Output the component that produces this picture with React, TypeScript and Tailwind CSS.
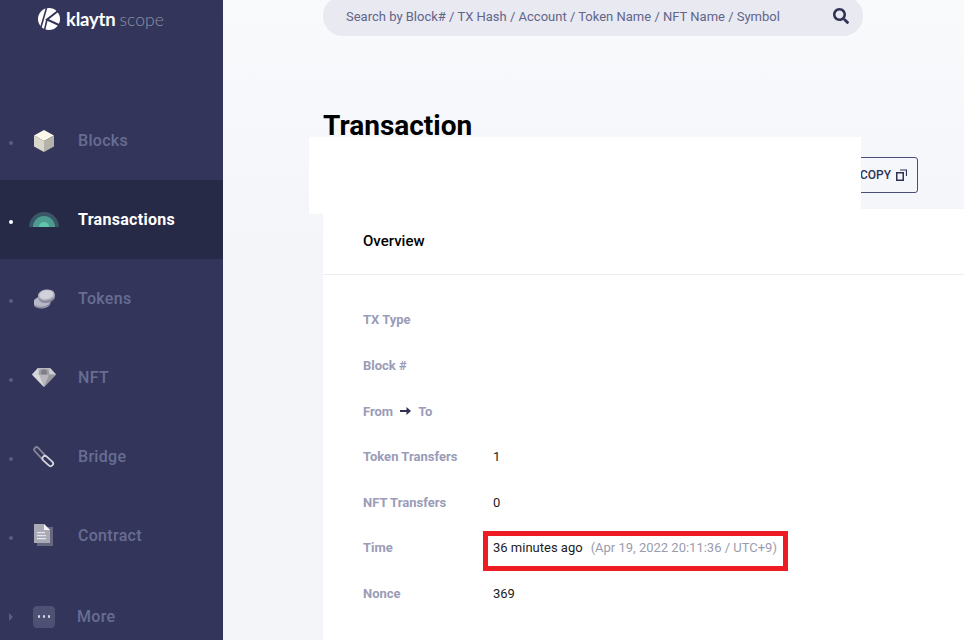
import { FaSearch } from "react-icons/fa";

const CubeIcon = () => (
  <svg width="20" height="22" viewBox="0 0 20 22">
    <path d="M10 0L20 5.5L10 11L0 5.5Z" fill="#fbf7ea" />
    <path d="M0 5.5L10 11V22L0 16.5Z" fill="#d9d6cb" />
    <path d="M20 5.5L10 11V22L20 16.5Z" fill="#b4b2aa" />
  </svg>
);

const CoinsIcon = () => (
  <svg width="21" height="20" viewBox="0 0 21 20">
    <g transform="rotate(-8 8 13)">
      <ellipse cx="8" cy="14.5" rx="8.5" ry="5" fill="#8e90a4" />
      <ellipse cx="8" cy="12.5" rx="8.5" ry="5" fill="#b7b8c5" />
    </g>
    <g transform="rotate(-8 13 7)">
      <ellipse cx="12.5" cy="8" rx="8.5" ry="5.8" fill="#85879c" />
      <ellipse cx="12.5" cy="6" rx="8.5" ry="5.6" fill="#b0b1bf" />
      <ellipse cx="12.5" cy="5.6" rx="7" ry="4.4" fill="#d0d1da" />
    </g>
  </svg>
);

const DiamondIcon = () => (
  <svg width="24" height="19" viewBox="0 0 24 19">
    <path d="M6 0H18L24 6.5L12 19L0 6.5Z" fill="#b8b8bd" />
    <path d="M6 0L0 6.5H7Z" fill="#d6d6d9" />
    <path d="M18 0L24 6.5H17Z" fill="#d0d0d4" />
    <path d="M8 1.5H16L17.5 6.5H6.5Z" fill="#9a9aa2" />
    <path d="M10 1.5H14L15 6.5H9Z" fill="#7e7e88" />
    <path d="M0 6.5H7L12 19Z" fill="#d9d9dc" />
    <path d="M24 6.5H17L12 19Z" fill="#98989f" />
  </svg>
);

const LinkIcon = () => (
  <svg width="22" height="22" viewBox="0 0 22 22" fill="none">
    <path d="M3.5 3.5L9.5 10" stroke="#85869b" strokeWidth="6.4" strokeLinecap="round" />
    <path d="M3.5 3.5L9.5 10" stroke="#33365a" strokeWidth="2.8" strokeLinecap="round" />
    <path d="M12 12.5L17.5 17.5" stroke="#d6d6de" strokeWidth="7" strokeLinecap="round" />
    <path d="M12 12.5L17.5 17.5" stroke="#33365a" strokeWidth="3.4" strokeLinecap="round" />
  </svg>
);

const DocIcon = () => (
  <svg width="20" height="23" viewBox="0 0 20 23">
    <path d="M3 3H19V22H3Z" fill="#666880" />
    <path d="M0 0H10L16 6V19H0Z" fill="#a9aab6" />
    <path d="M10 0L16 6H10Z" fill="#f4f4f6" />
    <path d="M3 8H11V9.2H3ZM3 11H12V12.2H3ZM3 14H12V15.2H3Z" fill="#e4e4ea" />
  </svg>
);

const TxIcon = () => (
  <svg width="30" height="15" viewBox="0 0 30 15">
    <path d="M0 15A15 15 0 0 1 30 15Z" fill="#3a5566" />
    <path d="M4 15A11 11 0 0 1 26 15Z" fill="#4c9c90" />
    <path d="M10 15A5 5 0 0 1 20 15Z" fill="#62c4ac" />
  </svg>
);

const MoreIcon = () => (
  <div className="flex h-[22px] w-[22px] items-center justify-center gap-[2.5px] rounded bg-[#4e5173]">
    <span className="h-[2.5px] w-[2.5px] rounded-full bg-[#d9dae4]" />
    <span className="h-[2.5px] w-[2.5px] rounded-full bg-[#d9dae4]" />
    <span className="h-[2.5px] w-[2.5px] rounded-full bg-[#d9dae4]" />
  </div>
);

const navItems = [
  { label: "Blocks", icon: <CubeIcon /> },
  { label: "Transactions", icon: <TxIcon />, active: true },
  { label: "Tokens", icon: <CoinsIcon /> },
  { label: "NFT", icon: <DiamondIcon /> },
  { label: "Bridge", icon: <LinkIcon /> },
  { label: "Contract", icon: <DocIcon /> },
];

const rows = [
  { label: "TX Type" },
  { label: "Block #" },
  {
    label: (
      <span className="flex items-center">
        From
        <svg className="mx-[7px]" width="11" height="8" viewBox="0 0 11 8">
          <path d="M0 3H6.5V0L11 4L6.5 8V5H0Z" fill="#2f3253" />
        </svg>
        To
      </span>
    ),
  },
  { label: "Token Transfers", value: "1" },
  { label: "NFT Transfers", value: "0" },
  {
    label: "Time",
    value: (
      <>
        36 minutes ago<span className="ml-[8px] text-[#9a9cae]">(Apr 19, 2022 20:11:36 / UTC+9)</span>
      </>
    ),
  },
  { label: "Nonce", value: "369" },
];

const Sidebar = () => (
  <aside className="w-[223px] shrink-0 bg-[#33365a]">
    <div className="flex h-[101px] items-start pl-[38px] pt-[8px]">
      <svg width="22" height="22" viewBox="0 0 22 22" fill="none">
        <circle cx="11" cy="11" r="11" fill="#ffffff" />
        <path d="M8.5 0L3 19" stroke="#33365a" strokeWidth="1.6" />
        <path d="M20 3L9 11.5L21 17" stroke="#33365a" strokeWidth="2" />
        <path d="M9 11.5L6.5 22" stroke="#33365a" strokeWidth="1.6" />
      </svg>
      <span className="ml-[6px] mt-[1px] font-['Lato'] text-[18.5px] leading-[21px] font-bold tracking-[-0.2px] text-white">klaytn</span>
      <span className="ml-[4px] mt-[1px] font-['Lato'] text-[17.5px] leading-[21px] font-light tracking-[0.1px] text-[#8e90a6]">scope</span>
    </div>
    <nav>
      {navItems.map((item) => (
        <div
          key={item.label}
          className={`flex h-[79px] items-center pl-[9px] ${item.active ? "bg-[#272a47]" : ""}`}
        >
          <span className={`mt-[4px] h-1 w-1 rounded-full ${item.active ? "bg-white" : "bg-[#5a5e82]"}`} />
          <div className="ml-[11px] flex w-[40px] justify-center">{item.icon}</div>
          <span className={`ml-[14px] text-[16px] tracking-[0.3px] ${item.active ? "font-bold text-white" : "font-medium text-[#686d92]"}`}>
            {item.label}
          </span>
        </div>
      ))}
      <div className="flex h-[79px] items-center pl-[9px] pt-[4px]">
        <span className="h-0 w-0 border-y-[4px] border-l-[4px] border-y-transparent border-l-[#5a5e82]" />
        <div className="ml-[11px] flex w-[40px] justify-center"><MoreIcon /></div>
        <span className="ml-[13px] text-[16px] font-medium tracking-[0.3px] text-[#686d92]">More</span>
      </div>
    </nav>
  </aside>
);

const App = () => {
  return (
    <div className="relative flex h-[640px] w-[964px] overflow-hidden font-['Roboto',sans-serif]">
      <Sidebar />
      <main className="min-w-0 flex-1 bg-gradient-to-b from-[#f9fafc] to-[#f3f5f9] to-40% pl-[100px]">
        <div className="-mt-[4px] flex h-[40px] w-[540px] items-center justify-between rounded-full bg-[#e8e9f1] pl-[23px] pr-[14px]">
          <span className="pt-[1px] text-[13px] text-[#62658a]">Search by Block# / TX Hash / Account / Token Name / NFT Name / Symbol</span>
          <FaSearch className="text-[16px] text-[#2f3253]" />
        </div>
        <h1 className="mt-[72px] text-[28px] leading-[36px] font-bold text-black">Transaction</h1>
        <div className="mt-[13px] flex h-[36px] justify-end pr-[46px]">
          <button className="flex items-center gap-[5px] rounded-[3px] border border-[#4a4d78] pl-[14px] pr-[10px] text-[12px] font-medium text-[#2f3253]">
            COPY
            <svg width="11" height="12" viewBox="0 0 11 12" fill="none" stroke="#2f3253">
              <path d="M0.75 3.75H7.25V11.25H0.75Z" strokeWidth="1.5" />
              <path d="M4 1H10.5V7" strokeWidth="1.2" />
            </svg>
          </button>
        </div>
        <section className="mt-[16px] h-[440px] bg-white">
          <div className="flex h-[66px] items-center border-b border-[#ececf1] pl-[40px] text-[15px] font-medium text-black">
            Overview
          </div>
          <div className="pl-[40px] pt-[22.35px] text-[13px]">
            {rows.map((row, i) => (
              <div key={i} className="flex h-[45.6px] items-center">
                <div className="w-[130px] font-bold text-[#9a9cb8]">{row.label}</div>
                <div className="text-[#1c1c1c]">{row.value}</div>
              </div>
            ))}
          </div>
        </section>
      </main>
      {/* redaction patch and highlight box from the screenshot */}
      <div className="absolute left-[309px] top-[137px] h-[77px] w-[552px] bg-white" />
      <div className="absolute left-[483px] top-[531px] h-[40px] w-[305px] border-[5px] border-[#ed1c24]" />
    </div>
  );
};

export default App;
